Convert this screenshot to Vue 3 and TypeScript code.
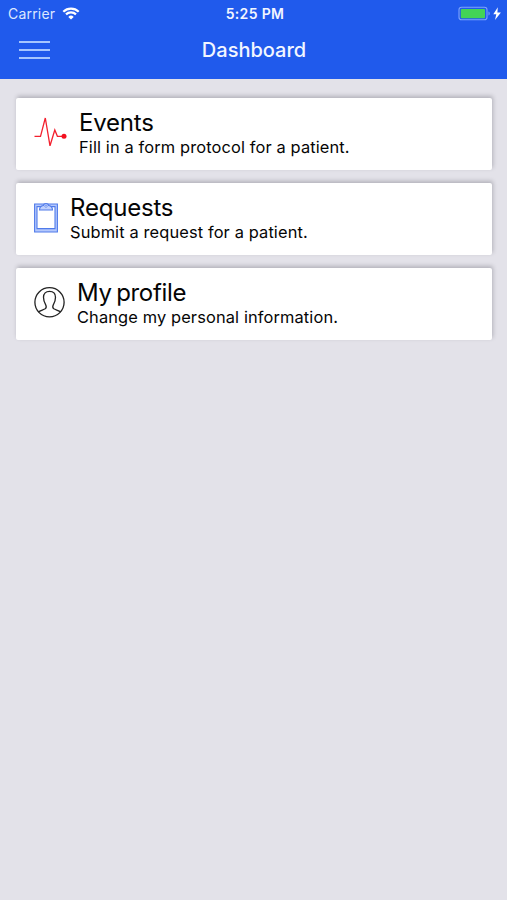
<script setup lang="ts">
interface MenuCard {
  id: 'events' | 'requests' | 'profile'
  title: string
  description: string
}

const cards: MenuCard[] = [
  { id: 'events', title: 'Events', description: 'Fill in a form protocol for a patient.' },
  { id: 'requests', title: 'Requests', description: 'Submit a request for a patient.' },
  { id: 'profile', title: 'My profile', description: 'Change my personal information.' },
]
</script>

<template>
  <div class="screen">
    <header class="header">
      <div class="status">
        <div class="carrier">
          <span>Carrier</span>
          <svg class="wifi" width="18" height="13" viewBox="0 0 18 13" aria-hidden="true">
            <path d="M1.3 4.7a11 11 0 0 1 15.4 0" />
            <path d="M4 7.4a7.2 7.2 0 0 1 10 0" />
            <path class="solid" d="M9 12.6 6.3 9.9a3.8 3.8 0 0 1 5.4 0z" />
          </svg>
        </div>
        <span class="time">5:25 PM</span>
        <div class="power">
          <svg width="44" height="16" viewBox="0 0 44 16" aria-hidden="true">
            <rect class="case" x="1" y="1.2" width="28" height="12.6" rx="2.6" />
            <rect class="charge" x="2.8" y="3" width="24.2" height="9.2" rx="1" />
            <path class="tip" d="M30.5 5.5c1.6.4 1.6 3.7 0 4.1z" />
            <path class="bolt" d="M39.8 1.2 35.3 8.2h3l-1.3 5.8 5.9-7.4h-3.5z" />
          </svg>
        </div>
      </div>
      <nav class="bar">
        <button class="menu" type="button" aria-label="Menu">
          <i></i><i></i><i></i>
        </button>
        <h1>Dashboard</h1>
      </nav>
    </header>

    <main class="cards">
      <section v-for="card in cards" :key="card.id" class="card" :class="card.id">
        <svg v-if="card.id === 'events'" class="icon" width="33" height="32" viewBox="0 0 33 32" aria-hidden="true">
          <path d="M.5 20.3h6L11.3 2 16 29.8 20.8 14l2.6 6.3H30" />
          <circle cx="30" cy="20.2" r="2.5" />
        </svg>
        <svg v-else-if="card.id === 'requests'" class="icon" width="24" height="32" viewBox="0 0 24 32" aria-hidden="true">
          <path class="frame" d="M.6 3h22.8v28H.6z" />
          <path class="paper" d="M3 5.6h18v22H3z" />
          <path class="clip" d="M5.500 9c.1-2.900 1.500-4.100 3.800-4.500a2.800 2.800 0 0 1 5.400 0c2.300.4 3.700 1.600 3.800 4.500z" />
          <circle class="hole" cx="12" cy="5.200" r="1.100" />
        </svg>
        <svg v-else class="icon" width="31" height="32" viewBox="0 0 31 32" aria-hidden="true">
          <circle cx="15.5" cy="16.3" r="14.6" />
          <path d="M4.300 25.900c2.100-1.500 5.200-2 6.900-3.100 1.300-.9 1.200-2.500.5-4-1.400-2.300-2.200-4.900-2.200-7.600 0-3.700 2.300-5.900 6-5.900s6 2.200 6 5.900c0 2.700-.8 5.300-2.200 7.600-.7 1.500-.8 3.100.5 4 1.700 1.100 4.800 1.600 6.900 3.100" />
        </svg>
        <div class="text">
          <h2>{{ card.title }}</h2>
          <p>{{ card.description }}</p>
        </div>
      </section>
    </main>
  </div>
</template>

<style>
body {
  background: #e3e2e9;
}
</style>

<style scoped>
.screen {
  min-height: 900px;
  background: #e3e2e9;
  color: #050505;
  font-family: Inter, "Liberation Sans", sans-serif;
}
.header {
  box-sizing: border-box;
  height: 79px;
  background: #205aec;
  color: #f2f6ff;
}
.status {
  display: grid;
  grid-template-columns: 1fr auto 1fr;
  align-items: center;
  height: 27px;
  padding: 0 5px 0 8px;
  font-size: 14px;
  line-height: 26px;
}
.carrier {
  display: flex;
  align-items: center;
  gap: 7px;
  color: #dce7ff;
  letter-spacing: 0.2px;
}
.wifi {
  fill: none;
  stroke: #fff;
  stroke-width: 2.2;
}
.wifi .solid {
  fill: #fff;
  stroke: none;
}
.time {
  font-size: 14px;
  font-weight: 600;
  letter-spacing: 0.35px;
}
.power {
  display: flex;
  justify-content: flex-end;
}
.case {
  fill: none;
  stroke: #7da4fa;
  stroke-width: 1.1;
}
.charge {
  fill: #43d455;
}
.tip {
  fill: #7da4fa;
}
.bolt {
  fill: #fff;
}
.bar {
  display: grid;
  grid-template-columns: 1fr auto 1fr;
  align-items: center;
  height: 46px;
  padding: 0 18px 0 19px;
}
.menu {
  display: flex;
  flex-direction: column;
  gap: 6.2px;
  width: 31px;
  padding: 0;
  border: 0;
  background: none;
}
.menu i {
  height: 2px;
  background: #a6c6ff;
}
h1 {
  margin: 0;
  font-size: 20px;
  font-weight: 500;
  line-height: 46px;
}
.cards {
  display: flex;
  flex-direction: column;
  gap: 13px;
  padding: 18.5px 15px 0 16px;
}
.card {
  display: flex;
  box-sizing: border-box;
  height: 72px;
  padding: 10.5px 18px 0;
  border-radius: 2px;
  background: #fff;
  box-shadow: 1px -2px 4px rgba(40, 40, 50, 0.26);
}
.icon {
  flex: none;
  margin-top: 8px;
  fill: none;
  stroke-width: 1.3;
}
.events .icon {
  stroke: #f3202e;
}
.events circle {
  fill: #f3101f;
  stroke: none;
}
.requests .icon {
  stroke: #507bea;
  stroke-width: 1.1;
}
.requests .frame {
  fill: #b4c8fc;
}
.requests .paper {
  fill: #fff;
}
.requests .clip {
  fill: #c1d1fd;
}
.requests .hole {
  fill: #fff;
  stroke-width: 0.8;
}
.profile .icon {
  stroke: #222;
}
.text {
  margin-left: 12px;
  white-space: nowrap;
}
h2 {
  margin: 0;
  font-size: 24px;
  font-weight: 400;
  line-height: 30px;
  letter-spacing: -0.2px;
  word-spacing: -2px;
}
.profile h2 {
  letter-spacing: -0.3px;
}
p {
  margin: -1px 0 0;
  font-size: 16.4px;
  line-height: 20px;
  letter-spacing: 0.13px;
}
</style>
